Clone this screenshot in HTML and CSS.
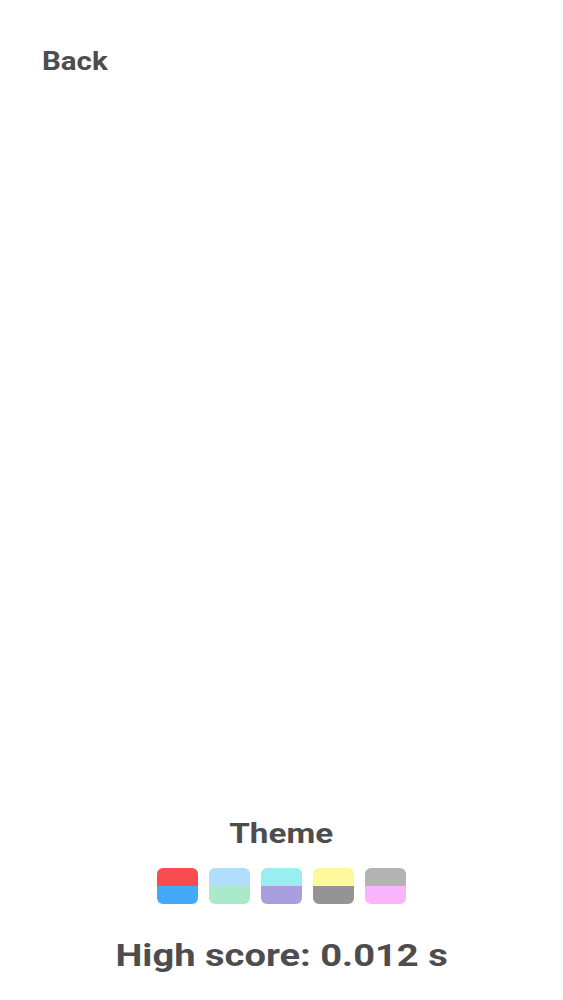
FILE: index.html
```html
<!DOCTYPE html>
<html lang="en">
<head>
<meta charset="utf-8">
<title>Theme</title>
<link rel="stylesheet" href="styles.css">
</head>
<body>
<div class="page">
  <header class="top">
    <span class="back">Back</span>
  </header>
  <section class="bottom">
    <div class="theme-title"><span class="wide theme-text">Theme</span></div>
    <div class="swatches">
      <div class="swatch"><span class="half red"></span><span class="half blue"></span></div>
      <div class="swatch"><span class="half lightblue"></span><span class="half mint"></span></div>
      <div class="swatch"><span class="half cyan"></span><span class="half purple"></span></div>
      <div class="swatch"><span class="half yellow"></span><span class="half darkgray"></span></div>
      <div class="swatch"><span class="half gray"></span><span class="half pink"></span></div>
    </div>
    <div class="score"><span class="wide score-text">High score: 0.012 s</span></div>
  </section>
</div>
</body>
</html>
```
FILE: styles.css
```css
html, body {
  margin: 0;
  padding: 0;
  background: #ffffff;
}
.page {
  min-height: 1000px;
  display: flex;
  flex-direction: column;
  font-family: Roboto, "Liberation Sans", sans-serif;
  font-weight: 700;
  color: #4d4d4f;
}
.top {
  padding: 49px 0 0 42px;
}
.back {
  display: inline-block;
  font-size: 25px;
  line-height: 25px;
  transform: scaleX(1.18);
  transform-origin: left center;
}
.bottom {
  margin-top: auto;
  display: flex;
  flex-direction: column;
  align-items: center;
  padding-bottom: 29px;
}
.wide {
  display: inline-block;
  transform-origin: center center;
}
.theme-text {
  transform: scaleX(1.23);
}
.score-text {
  transform: scaleX(1.19);
}
.theme-title {
  font-size: 27px;
  line-height: 27px;
}
.swatches {
  display: flex;
  gap: 11px;
  margin-top: 20px;
}
.swatch {
  width: 41px;
  height: 36px;
  border-radius: 6px;
  overflow: hidden;
  display: flex;
  flex-direction: column;
}
.half {
  flex: 1;
}
.red { background: #fa4b50; }
.blue { background: #44a9f6; }
.lightblue { background: #b2ddfc; }
.mint { background: #abe9cb; }
.cyan { background: #9aeef1; }
.purple { background: #aa9fde; }
.yellow { background: #fcf89b; }
.darkgray { background: #959394; }
.gray { background: #b4b3b4; }
.pink { background: #f9b4fb; }
.score {
  margin-top: 35px;
  font-size: 32px;
  line-height: 32px;
}
```
